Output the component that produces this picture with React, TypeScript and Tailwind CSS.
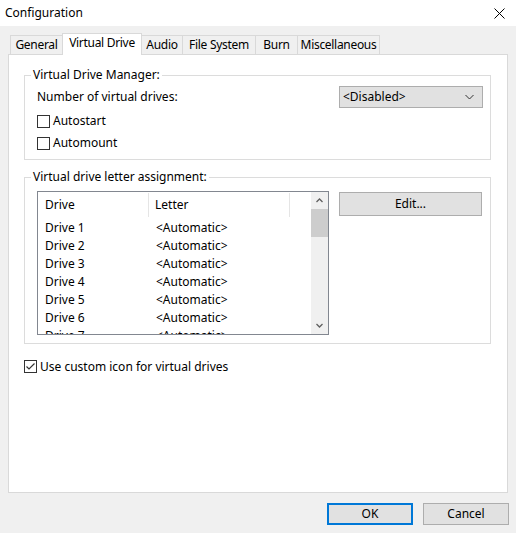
import React from 'react'

const TABS = [
  { name: 'General', w: 'w-[53px]' },
  { name: 'Virtual Drive', w: 'w-[80px]', active: true },
  { name: 'Audio', w: 'w-[42px]' },
  { name: 'File System', w: 'w-[74px]' },
  { name: 'Burn', w: 'w-[43px]' },
  { name: 'Miscellaneous', w: 'w-[83px]' }
]

const DRIVES = [1, 2, 3, 4, 5, 6, 7]

function CheckBox({ checked, label }: { checked?: boolean; label: string }) {
  return (
    <div className="flex items-center h-[22px]">
      <div className="w-[13px] h-[13px] border border-[#333333] bg-white flex items-center justify-center">
        {checked && (
          <svg width="11" height="11" viewBox="0 0 11 11">
            <path d="M1.5 5.5 L4 8 L9.5 2.5" fill="none" stroke="#333333" strokeWidth="1.2" />
          </svg>
        )}
      </div>
      <span className="ml-[3px] text-[#000]">{label}</span>
    </div>
  )
}

function GroupBox({ title, className, children }: { title: string; className?: string; children: React.ReactNode }) {
  return (
    <div className={`relative border border-[#dcdcdc] ${className ?? ''}`}>
      <span className="absolute -top-[9px] left-[6px] bg-white px-[2px] leading-[16px]">{title}</span>
      {children}
    </div>
  )
}

export default function App() {
  return (
    <div
      className="w-[516px] h-[533px] bg-[#f0f0f0] flex flex-col text-[12px] text-black overflow-hidden"
      style={{ fontFamily: '"Noto Sans", "Open Sans", sans-serif' }}
    >
      {/* title bar */}
      <div className="h-[26px] bg-white flex items-center justify-between pl-[5px] pr-[11px] shrink-0">
        <span className="text-[12px]">Configuration</span>
        <svg width="11" height="11" viewBox="0 0 11 11">
          <path d="M0.5 0.5 L10.5 10.5 M10.5 0.5 L0.5 10.5" stroke="#000" strokeWidth="1" />
        </svg>
      </div>

      {/* tabs */}
      <div className="flex items-end ml-[10px] mt-[7px] h-[21px] relative z-10 tracking-[-0.3px] whitespace-nowrap">
        {TABS.map(t =>
          t.active ? (
            <div
              key={t.name}
              className={`${t.w} h-[22px] -mb-[1px] -ml-[1px] bg-white border border-b-0 border-[#d9d9d9] flex items-start justify-center pt-[1px] leading-[16px] relative z-10`}
            >
              {t.name}
            </div>
          ) : (
            <div
              key={t.name}
              className={`${t.w} h-[19px] bg-[#f0f0f0] border border-b-0 border-[#d9d9d9] -ml-[1px] first:ml-0 flex items-center justify-center leading-[16px]`}
            >
              {t.name}
            </div>
          )
        )}
      </div>

      {/* tab page */}
      <div className="mx-[8px] h-[439px] bg-white border border-[#d9d9d9] pl-[15px] pr-[16px] pt-[20px] shrink-0">
        <GroupBox title="Virtual Drive Manager:" className="h-[85px] pl-[12px] pr-[7px] pt-[10px]">
          <div className="flex items-center justify-between h-[22px]">
            <span>Number of virtual drives:</span>
            <div className="w-[144px] h-[22px] bg-[#e1e1e1] border border-[#adadad] flex items-center justify-between pl-[3px] pr-[8px]">
              <span>&lt;Disabled&gt;</span>
              <svg width="9" height="6" viewBox="0 0 9 6">
                <path d="M0.5 1 L4.5 5 L8.5 1" fill="none" stroke="#333" strokeWidth="1" />
              </svg>
            </div>
          </div>
          <div className="mt-[2px]">
            <CheckBox label="Autostart" />
            <CheckBox label="Automount" />
          </div>
        </GroupBox>

        <GroupBox title="Virtual drive letter assignment:" className="mt-[17px] h-[167px] pl-[12px] pr-[8px] pt-[13px]">
          <div className="flex items-start">
            <div className="w-[292px] h-[144px] border border-[#828790] flex overflow-hidden">
              <div className="flex-1 overflow-hidden">
                <div className="flex h-[26px] items-stretch">
                  <div className="w-[111px] pl-[7px] flex items-center border-r border-[#e5e5e5] my-[1px]">Drive</div>
                  <div className="w-[141px] pl-[6px] flex items-center border-r border-[#e5e5e5] my-[1px]">Letter</div>
                </div>
                {DRIVES.map(d => (
                  <div key={d} className="flex h-[18px] items-center pt-[1px]">
                    <div className="w-[111px] pl-[7px]">Drive {d}</div>
                    <div className="pl-[7px]">&lt;Automatic&gt;</div>
                  </div>
                ))}
              </div>
              <div className="w-[17px] h-full bg-[#f0f0f0] flex flex-col shrink-0">
                <div className="h-[17px] flex items-center justify-center">
                  <svg width="7" height="5" viewBox="0 0 7 5">
                    <path d="M0.5 4 L3.5 1 L6.5 4" fill="none" stroke="#606060" strokeWidth="1.3" />
                  </svg>
                </div>
                <div className="h-[28px] bg-[#cdcdcd]" />
                <div className="flex-1" />
                <div className="h-[17px] flex items-center justify-center">
                  <svg width="7" height="5" viewBox="0 0 7 5">
                    <path d="M0.5 1 L3.5 4 L6.5 1" fill="none" stroke="#606060" strokeWidth="1.3" />
                  </svg>
                </div>
              </div>
            </div>
            <button className="ml-[10px] mt-[1px] w-[143px] h-[24px] bg-[#e1e1e1] border border-[#adadad] flex items-center justify-center">
              Edit...
            </button>
          </div>
        </GroupBox>

        <div className="mt-[16px]">
          <div className="flex items-center h-[13px]">
            <div className="w-[13px] h-[13px] border border-[#333333] bg-white flex items-center justify-center">
              <svg width="11" height="11" viewBox="0 0 11 11">
                <path d="M1.5 5.5 L4 8 L9.5 2.5" fill="none" stroke="#333333" strokeWidth="1.2" />
              </svg>
            </div>
            <span className="ml-[3px]">Use custom icon for virtual drives</span>
          </div>
        </div>
      </div>

      {/* buttons */}
      <div className="flex justify-end gap-[10px] pr-[7px] mt-[10px]">
        <button className="w-[86px] h-[22px] bg-[#e1e1e1] border-2 border-[#0078d7] flex items-center justify-center">
          OK
        </button>
        <button className="w-[86px] h-[22px] bg-[#e1e1e1] border border-[#adadad] flex items-center justify-center">
          Cancel
        </button>
      </div>
    </div>
  )
}
